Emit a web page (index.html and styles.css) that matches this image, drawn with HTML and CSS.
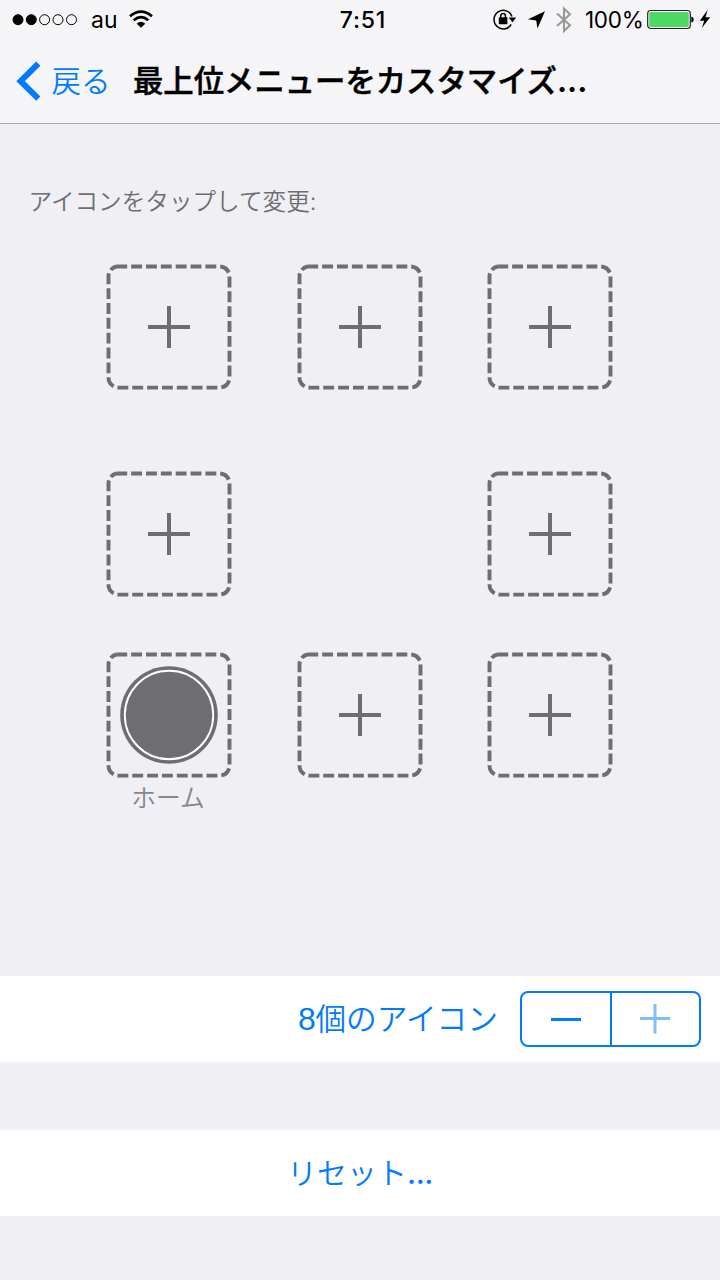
FILE: index.html
```html
<!DOCTYPE html>
<html lang="ja">
<head>
<meta charset="utf-8">
<title>最上位メニューをカスタマイズ</title>
<link rel="stylesheet" href="styles.css">
</head>
<body>
<svg class="defs" width="0" height="0" aria-hidden="true">
  <symbol id="frame" viewBox="0 0 126 126">
    <path class="dash" d="M10.3 2.5H113.5A10 10 0 0 1 123.5 12.5V113.6A10 10 0 0 1 113.5 123.6H12.5A10 10 0 0 1 2.5 113.6V12.5A10 10 0 0 1 10.3 2.5"/>
  </symbol>
  <symbol id="add" viewBox="0 0 126 126">
    <use href="#frame"/>
    <path class="plus" d="M42 63H84M63 42V84"/>
  </symbol>
</svg>
<header class="header">
  <div class="status">
    <div class="carrier">
      <svg width="66" height="40" viewBox="0 0 66 40"><g stroke="#000"><circle cx="6" cy="19.7" r="5" fill="#000"/><circle cx="19.3" cy="19.7" r="5" fill="#000"/><g fill="none"><circle cx="32.6" cy="19.7" r="5"/><circle cx="46" cy="19.7" r="5"/><circle cx="59.5" cy="19.7" r="5"/></g></g></svg>
      <span class="au">au</span>
      <svg class="wifi" width="24" height="40" viewBox="0 0 24 40"><g fill="none" stroke="#000" stroke-width="2.7"><path d="M1 16.2Q12 7 23 16.2"/><path d="M4.7 20.2Q12 14 19.3 20.2"/></g><path d="M7.7 23.7Q12 20 16.3 23.7L12 27.7Z"/></svg>
    </div>
    <time class="clock">7:51</time>
    <div class="indicators">
      <svg width="97" height="40" viewBox="0 0 97 40">
        <path d="M20.2 24.5A9.3 9.3 0 1 1 21 16.5" fill="none" stroke="#000" stroke-width="1.5"/>
        <path d="M17.6 17.6H25.2L21.4 22.2Z"/>
        <rect x="7.8" y="17.3" width="8.6" height="6.9" rx=".7"/>
        <path d="M9.7 18V16.2A2.4 2.8 0 0 1 14.5 16.2V18" fill="none" stroke="#000" stroke-width="1.5"/>
        <path d="M54 11.3L46.5 28.5L45.2 20.4L37 19.3Z"/>
        <path d="M66 13.5L79 25.2L73 31V8.7L79 14.2L66 26" fill="none" stroke="#999" stroke-width="2.1"/>
      </svg>
      <span class="percent">100%</span>
      <svg width="68" height="40" viewBox="0 0 68 40"><rect x=".7" y="10.5" width="42.6" height="18" rx="3" fill="#fff" stroke="#222" stroke-width="1.2"/><rect x="2.2" y="12" width="39.6" height="15" rx="1.5" fill="#4cd964"/><path d="M44.3 16.5Q46.8 17 46.8 19.5T44.3 22.5Z"/><path d="M60.7 9.8L52.8 20.8H57.2L54.8 28L63.2 17.2H58.5Z"/></svg>
    </div>
  </div>
  <nav class="nav">
    <a class="back"><svg width="28" height="42" viewBox="0 0 28 42"><path d="M24.3 2.7L6.6 20.2L24.3 37.7" fill="none" stroke="#007aff" stroke-width="6"/></svg><span>戻る</span></a>
    <h1 class="title">最上位メニューをカスタマイズ<span class="dots">...</span></h1>
  </nav>
</header>
<main>
  <section class="editor">
    <p class="hint">アイコンをタップして変更:</p>
    <div class="grid">
      <svg class="slot"><use href="#add"/></svg>
      <svg class="slot"><use href="#add"/></svg>
      <svg class="slot"><use href="#add"/></svg>
      <svg class="slot"><use href="#add"/></svg>
      <span></span>
      <svg class="slot"><use href="#add"/></svg>
      <div class="home">
        <svg class="slot" viewBox="0 0 126 126"><use href="#frame"/><circle cx="63" cy="63" r="48.8" fill="#6d6d72"/><circle cx="63" cy="63" r="44.2" fill="none" stroke="#fff" stroke-width="1.9"/></svg>
        <span class="home-label">ホーム</span>
      </div>
      <svg class="slot"><use href="#add"/></svg>
      <svg class="slot"><use href="#add"/></svg>
    </div>
  </section>
  <section class="row count">
    <span class="count-label"><span class="digit">8</span>個のアイコン</span>
    <div class="stepper">
      <div class="step"><svg width="30" height="30" viewBox="0 0 30 30"><path d="M0 15.5H30" stroke="#007aff" stroke-width="3"/></svg></div>
      <div class="step"><svg width="30" height="30" viewBox="0 0 30 30"><path d="M0 14.5H30M15 0V29.5" stroke="#80bcff" stroke-width="3"/></svg></div>
    </div>
  </section>
  <section class="row reset"><span>リセット<span class="dots">...</span></span></section>
</main>
</body>
</html>
```
FILE: styles.css
```css
* { box-sizing: border-box; }
body {
  margin: 0;
  width: 720px;
  height: 1280px;
  overflow: hidden;
  background: #efeff4;
  font-family: Inter, "Noto Sans CJK JP", sans-serif;
  color: #000;
}
svg { display: block; flex: none; }
.defs { display: none; }
.header {
  height: 124px;
  background: #f5f5f8;
  border-bottom: 1px solid #aaaab0;
}
.status {
  height: 40px;
  display: grid;
  grid-template-columns: 1fr auto 1fr;
  line-height: 40px;
  font-size: 23px;
  white-space: nowrap;
}
.carrier { display: flex; padding-left: 12px; }
.au { margin-left: 13px; width: 26px; }
.wifi { margin-left: 12px; }
.clock { font-weight: 500; padding-left: 6px; letter-spacing: .8px; }
.indicators { display: flex; justify-content: flex-end; padding-right: 5px; }
.percent { width: 62px; font-size: 22.5px; margin-left: -3px; letter-spacing: -.3px; }
.nav {
  height: 83px;
  display: flex;
  align-items: center;
  padding-left: 14px;
  line-height: 44px;
  white-space: nowrap;
}
.back { display: flex; align-items: center; color: #007aff; font-size: 29.5px; font-weight: 350; width: 119px; }
.back span { margin-left: 9.5px; padding-bottom: 2px; }
.title { margin: 0; padding-bottom: 4px; font-size: 30.35px; font-weight: 500; font-family: "Noto Sans CJK JP", sans-serif; -webkit-text-stroke: .5px #000; }
.dots { font-family: Inter, sans-serif; font-weight: 500; }
.title .dots { font-weight: 700; -webkit-text-stroke: 0; }
.editor { height: 852px; padding-top: 63px; }
.hint { margin: 0 0 0 28.5px; height: 30px; line-height: 30px; font-size: 23.6px; font-weight: 350; color: #6d6d72; }
.grid {
  display: grid;
  grid-template-columns: repeat(3, 126px);
  grid-template-rows: 206.5px 181.5px 170px;
  column-gap: 64.6px;
  margin: 47px 0 0 106px;
}
.slot { width: 126px; height: 126px; }
.dash { fill: none; stroke: #6d6d72; stroke-width: 3.9; stroke-dasharray: 10.9 3.95; }
.plus { fill: none; stroke: #6d6d72; stroke-width: 4; }
.home { display: flex; flex-direction: column; align-items: center; }
.home-label { font-size: 24.8px; line-height: 40px; margin-left: -2px; font-weight: 350; color: #85858a; }
.row { background: #fff; height: 86px; display: flex; align-items: center; color: #007aff; font-size: 30.7px; font-weight: 350; }
.count { justify-content: flex-end; padding-right: 19px; gap: 22px; }
.count-label { padding-bottom: 5px; }
.digit { display: inline-block; width: 17.5px; font-weight: 400; font-size: 32px; font-family: "Liberation Sans", sans-serif; }
.stepper { width: 181px; height: 56px; border: 2px solid #007aff; border-radius: 8px; display: grid; grid-template-columns: 87.5px 1fr; }
.step { display: flex; align-items: center; justify-content: center; }
.step + .step { border-left: 2px solid #007aff; }
.reset { margin-top: 68px; justify-content: center; padding-bottom: 4px; font-size: 30px; }
.reset .dots { letter-spacing: -.4px; }
```
